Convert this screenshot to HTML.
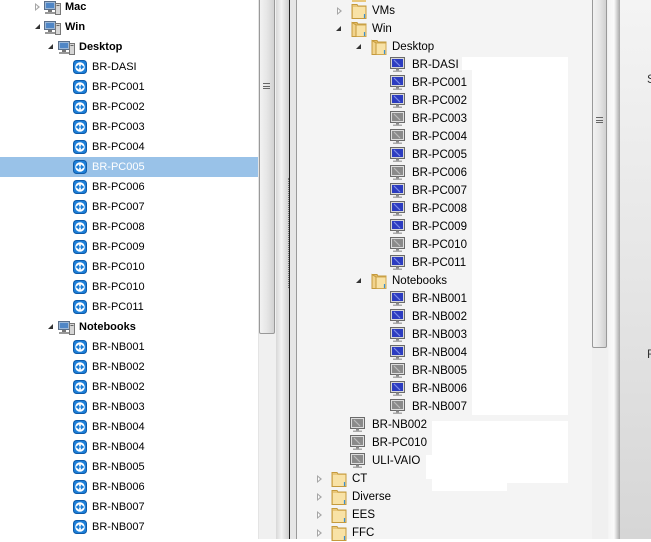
<!DOCTYPE html>
<html><head><meta charset="utf-8"><style>
*{margin:0;padding:0;box-sizing:border-box}
body{width:651px;height:539px;overflow:hidden;position:relative;background:#fff;font-family:"Liberation Sans",Tahoma,sans-serif}
.a{position:absolute}
.l{position:absolute;height:20px;line-height:20px;font-size:11px;color:#000;white-space:nowrap}
.l.b{font-weight:bold}
.r{position:absolute;height:18px;line-height:18px;font-size:11.5px;color:#000;white-space:nowrap}
svg.i{position:absolute}
.tri{position:absolute;width:0;height:0}
.tc{border-top:4px solid transparent;border-bottom:4px solid transparent;border-left:5px solid #a6a6a6}
.tc:after{content:"";position:absolute;left:-4px;top:-2px;border-top:2px solid transparent;border-bottom:2px solid transparent;border-left:2px solid #fff}
.to{border-left:5px solid transparent;border-bottom:5px solid #333}
</style></head><body>
<svg width="0" height="0" style="position:absolute">
<defs>
<symbol id="tv" viewBox="0 0 14 14"><rect x="0.5" y="0.5" width="13" height="13" rx="3" fill="#1d7fd8" stroke="#0e5aa8"/><circle cx="7" cy="7" r="4.8" fill="#fff"/><path d="M3.6 7h6.8M3.6 7l2-1.6v3.2zM10.4 7l-2-1.6v3.2z" stroke="#1d7fd8" stroke-width="1.1" fill="#1d7fd8"/></symbol>
<symbol id="mb" viewBox="0 0 15 15"><rect x="0.5" y="0.5" width="14" height="11" fill="#d8d8d8" stroke="#6a6a6a"/><rect x="2" y="2" width="11" height="8" fill="#2c3cc0"/><path d="M4 3l6 6" stroke="#7d8ce8" stroke-width="1.2"/><rect x="6" y="11.5" width="3" height="2" fill="#888"/><rect x="3" y="13.5" width="9" height="1.5" fill="#aaa"/></symbol>
<symbol id="mg" viewBox="0 0 15 15"><rect x="0.5" y="0.5" width="14" height="11" fill="#dedede" stroke="#6a6a6a"/><rect x="2" y="2" width="11" height="8" fill="#8a8a8a"/><path d="M4 3l6 6" stroke="#bbb" stroke-width="1.2"/><rect x="6" y="11.5" width="3" height="2" fill="#888"/><rect x="3" y="13.5" width="9" height="1.5" fill="#aaa"/></symbol>
<symbol id="fc" viewBox="0 0 16 16"><path d="M1 1.5h5l1 1.5h8v12.5H1z" fill="#e9c77a" stroke="#c59a3c"/><rect x="2" y="4" width="12.5" height="11" fill="#f8e2a6"/><path d="M13.5 11v4" stroke="#3a8fd0" stroke-width="1.2"/></symbol>
<symbol id="fo" viewBox="0 0 16 16"><path d="M1 1.5h5l1 1.5h8v12.5H1z" fill="#e3bc66" stroke="#c59a3c"/><path d="M5 4h10v11.5H5z" fill="#f8e2a6" stroke="#d0a850"/><path d="M1 1.5L5 4v11.5L1 15.5z" fill="#f1d38c" stroke="#c59a3c"/><path d="M13.5 11v4" stroke="#3a8fd0" stroke-width="1.2"/></symbol>
<symbol id="cg" viewBox="0 0 17 15"><rect x="0.5" y="1.5" width="11" height="8" fill="#9cb8d8" stroke="#5a6f8a"/><rect x="2" y="3" width="8" height="5" fill="#4f86c6"/><rect x="4" y="10" width="4" height="2" fill="#777"/><rect x="1" y="12" width="10" height="2" fill="#999"/><rect x="11.5" y="3.5" width="5" height="11" fill="#d6d6d6" stroke="#777"/><rect x="12.5" y="5" width="3" height="1" fill="#666"/></symbol>
</defs></svg>

<div class="a" style="left:0;top:157px;width:258px;height:20px;background:#99c2e8"></div>
<div class="tri tc" style="left:35px;top:3px"></div>
<svg class="i" style="left:44px;top:0" width="17" height="15"><use href="#cg"/></svg><div class="l b" style="left:65px;top:-3px">Mac</div>
<div class="tri to" style="left:35px;top:24px"></div>
<svg class="i" style="left:44px;top:20px" width="17" height="15"><use href="#cg"/></svg><div class="l b" style="left:65px;top:17px">Win</div>
<div class="tri to" style="left:48px;top:44px"></div>
<svg class="i" style="left:58px;top:40px" width="17" height="15"><use href="#cg"/></svg><div class="l b" style="left:79px;top:37px">Desktop</div>
<div class="tri to" style="left:48px;top:324px"></div>
<svg class="i" style="left:58px;top:320px" width="17" height="15"><use href="#cg"/></svg><div class="l b" style="left:79px;top:317px">Notebooks</div>

<svg class="i" style="left:73px;top:60px" width="14" height="14"><use href="#tv"/></svg><div class="l" style="left:92px;top:57px">BR-DASI</div>
<svg class="i" style="left:73px;top:80px" width="14" height="14"><use href="#tv"/></svg><div class="l" style="left:92px;top:77px">BR-PC001</div>
<svg class="i" style="left:73px;top:100px" width="14" height="14"><use href="#tv"/></svg><div class="l" style="left:92px;top:97px">BR-PC002</div>
<svg class="i" style="left:73px;top:120px" width="14" height="14"><use href="#tv"/></svg><div class="l" style="left:92px;top:117px">BR-PC003</div>
<svg class="i" style="left:73px;top:140px" width="14" height="14"><use href="#tv"/></svg><div class="l" style="left:92px;top:137px">BR-PC004</div>
<svg class="i" style="left:73px;top:160px" width="14" height="14"><use href="#tv"/></svg><div class="l" style="left:92px;top:157px;color:#fff">BR-PC005</div>
<svg class="i" style="left:73px;top:180px" width="14" height="14"><use href="#tv"/></svg><div class="l" style="left:92px;top:177px">BR-PC006</div>
<svg class="i" style="left:73px;top:200px" width="14" height="14"><use href="#tv"/></svg><div class="l" style="left:92px;top:197px">BR-PC007</div>
<svg class="i" style="left:73px;top:220px" width="14" height="14"><use href="#tv"/></svg><div class="l" style="left:92px;top:217px">BR-PC008</div>
<svg class="i" style="left:73px;top:240px" width="14" height="14"><use href="#tv"/></svg><div class="l" style="left:92px;top:237px">BR-PC009</div>
<svg class="i" style="left:73px;top:260px" width="14" height="14"><use href="#tv"/></svg><div class="l" style="left:92px;top:257px">BR-PC010</div>
<svg class="i" style="left:73px;top:280px" width="14" height="14"><use href="#tv"/></svg><div class="l" style="left:92px;top:277px">BR-PC010</div>
<svg class="i" style="left:73px;top:300px" width="14" height="14"><use href="#tv"/></svg><div class="l" style="left:92px;top:297px">BR-PC011</div>
<svg class="i" style="left:73px;top:340px" width="14" height="14"><use href="#tv"/></svg><div class="l" style="left:92px;top:337px">BR-NB001</div>
<svg class="i" style="left:73px;top:360px" width="14" height="14"><use href="#tv"/></svg><div class="l" style="left:92px;top:357px">BR-NB002</div>
<svg class="i" style="left:73px;top:380px" width="14" height="14"><use href="#tv"/></svg><div class="l" style="left:92px;top:377px">BR-NB002</div>
<svg class="i" style="left:73px;top:400px" width="14" height="14"><use href="#tv"/></svg><div class="l" style="left:92px;top:397px">BR-NB003</div>
<svg class="i" style="left:73px;top:420px" width="14" height="14"><use href="#tv"/></svg><div class="l" style="left:92px;top:417px">BR-NB004</div>
<svg class="i" style="left:73px;top:440px" width="14" height="14"><use href="#tv"/></svg><div class="l" style="left:92px;top:437px">BR-NB004</div>
<svg class="i" style="left:73px;top:460px" width="14" height="14"><use href="#tv"/></svg><div class="l" style="left:92px;top:457px">BR-NB005</div>
<svg class="i" style="left:73px;top:480px" width="14" height="14"><use href="#tv"/></svg><div class="l" style="left:92px;top:477px">BR-NB006</div>
<svg class="i" style="left:73px;top:500px" width="14" height="14"><use href="#tv"/></svg><div class="l" style="left:92px;top:497px">BR-NB007</div>
<svg class="i" style="left:73px;top:520px" width="14" height="14"><use href="#tv"/></svg><div class="l" style="left:92px;top:517px">BR-NB007</div>

<div class="a" style="left:258px;top:0;width:18px;height:539px;background:#f0f0f0;border-left:1px solid #e4e4e4"></div>
<div class="a" style="left:259px;top:-2px;width:16px;height:336px;background:linear-gradient(90deg,#f2f2f2,#e6e6e6 50%,#d2d2d2);border:1px solid #999;border-radius:2px"></div>
<div class="a" style="left:263px;top:83px;width:7px;height:6px;border-top:1px solid #666;border-bottom:1px solid #666"><div style="margin-top:1.5px;height:1px;background:#666"></div></div>
<div class="a" style="left:276px;top:0;width:14px;height:539px;background:linear-gradient(90deg,#d8d8d8,#f3f3f3 40%,#c8c8c8)"></div>
<div class="a" style="left:289px;top:0;width:1px;height:539px;background:#222"></div>
<div class="a" style="left:290px;top:0;width:6px;height:539px;background:#e6e6e6"></div>
<div class="a" style="left:296px;top:0;width:1px;height:539px;background:#9a9a9a"></div>
<div class="a" style="left:288px;top:178px;width:1px;height:110px;border-left:1px dotted #777"></div>

<div class="a" style="left:297px;top:0;width:295px;height:539px;background:#f4f4f4"></div>
<div class="a" style="left:472px;top:57px;width:96px;height:358px;background:#fff"></div>
<div class="a" style="left:462px;top:57px;width:26px;height:13px;background:#fff"></div>
<div class="a" style="left:432px;top:421px;width:75px;height:70px;background:#fff"></div>
<div class="a" style="left:500px;top:421px;width:68px;height:62px;background:#fff"></div>
<div class="a" style="left:426px;top:455px;width:8px;height:24px;background:#fff"></div>

<div class="a" style="left:352px;top:-14px;width:14px;height:16px;background:#e9c77a"></div>
<div class="tri tc" style="left:337px;top:7px"></div>
<svg class="i" style="left:351px;top:3px" width="16" height="16"><use href="#fc"/></svg><div class="r" style="left:372px;top:2px">VMs</div>
<div class="tri to" style="left:336px;top:26px"></div>
<svg class="i" style="left:351px;top:21px" width="16" height="16"><use href="#fo"/></svg><div class="r" style="left:372px;top:20px">Win</div>
<div class="tri to" style="left:356px;top:44px"></div>
<svg class="i" style="left:371px;top:39px" width="16" height="16"><use href="#fo"/></svg><div class="r" style="left:392px;top:38px">Desktop</div>
<div class="tri to" style="left:356px;top:278px"></div>
<svg class="i" style="left:371px;top:273px" width="16" height="16"><use href="#fo"/></svg><div class="r" style="left:392px;top:272px">Notebooks</div>

<svg class="i" style="left:390px;top:57px" width="15" height="15"><use href="#mb"/></svg><div class="r" style="left:412px;top:56px">BR-DASI</div>
<svg class="i" style="left:390px;top:75px" width="15" height="15"><use href="#mb"/></svg><div class="r" style="left:412px;top:74px">BR-PC001</div>
<svg class="i" style="left:390px;top:93px" width="15" height="15"><use href="#mb"/></svg><div class="r" style="left:412px;top:92px">BR-PC002</div>
<svg class="i" style="left:390px;top:111px" width="15" height="15"><use href="#mg"/></svg><div class="r" style="left:412px;top:110px">BR-PC003</div>
<svg class="i" style="left:390px;top:129px" width="15" height="15"><use href="#mg"/></svg><div class="r" style="left:412px;top:128px">BR-PC004</div>
<svg class="i" style="left:390px;top:147px" width="15" height="15"><use href="#mb"/></svg><div class="r" style="left:412px;top:146px">BR-PC005</div>
<svg class="i" style="left:390px;top:165px" width="15" height="15"><use href="#mg"/></svg><div class="r" style="left:412px;top:164px">BR-PC006</div>
<svg class="i" style="left:390px;top:183px" width="15" height="15"><use href="#mb"/></svg><div class="r" style="left:412px;top:182px">BR-PC007</div>
<svg class="i" style="left:390px;top:201px" width="15" height="15"><use href="#mb"/></svg><div class="r" style="left:412px;top:200px">BR-PC008</div>
<svg class="i" style="left:390px;top:219px" width="15" height="15"><use href="#mb"/></svg><div class="r" style="left:412px;top:218px">BR-PC009</div>
<svg class="i" style="left:390px;top:237px" width="15" height="15"><use href="#mg"/></svg><div class="r" style="left:412px;top:236px">BR-PC010</div>
<svg class="i" style="left:390px;top:255px" width="15" height="15"><use href="#mb"/></svg><div class="r" style="left:412px;top:254px">BR-PC011</div>
<svg class="i" style="left:390px;top:291px" width="15" height="15"><use href="#mb"/></svg><div class="r" style="left:412px;top:290px">BR-NB001</div>
<svg class="i" style="left:390px;top:309px" width="15" height="15"><use href="#mb"/></svg><div class="r" style="left:412px;top:308px">BR-NB002</div>
<svg class="i" style="left:390px;top:327px" width="15" height="15"><use href="#mb"/></svg><div class="r" style="left:412px;top:326px">BR-NB003</div>
<svg class="i" style="left:390px;top:345px" width="15" height="15"><use href="#mb"/></svg><div class="r" style="left:412px;top:344px">BR-NB004</div>
<svg class="i" style="left:390px;top:363px" width="15" height="15"><use href="#mg"/></svg><div class="r" style="left:412px;top:362px">BR-NB005</div>
<svg class="i" style="left:390px;top:381px" width="15" height="15"><use href="#mb"/></svg><div class="r" style="left:412px;top:380px">BR-NB006</div>
<svg class="i" style="left:390px;top:399px" width="15" height="15"><use href="#mg"/></svg><div class="r" style="left:412px;top:398px">BR-NB007</div>
<svg class="i" style="left:350px;top:417px" width="15" height="15"><use href="#mg"/></svg><div class="r" style="left:372px;top:416px">BR-NB002</div>
<svg class="i" style="left:350px;top:435px" width="15" height="15"><use href="#mg"/></svg><div class="r" style="left:372px;top:434px">BR-PC010</div>
<svg class="i" style="left:350px;top:453px" width="15" height="15"><use href="#mg"/></svg><div class="r" style="left:372px;top:452px">ULI-VAIO</div>

<div class="tri tc" style="left:317px;top:475px"></div>
<svg class="i" style="left:331px;top:471px" width="16" height="16"><use href="#fc"/></svg><div class="r" style="left:352px;top:470px">CT</div>
<div class="tri tc" style="left:317px;top:493px"></div>
<svg class="i" style="left:331px;top:489px" width="16" height="16"><use href="#fc"/></svg><div class="r" style="left:352px;top:488px">Diverse</div>
<div class="tri tc" style="left:317px;top:511px"></div>
<svg class="i" style="left:331px;top:507px" width="16" height="16"><use href="#fc"/></svg><div class="r" style="left:352px;top:506px">EES</div>
<div class="tri tc" style="left:317px;top:529px"></div>
<svg class="i" style="left:331px;top:525px" width="16" height="16"><use href="#fc"/></svg><div class="r" style="left:352px;top:524px">FFC</div>

<div class="a" style="left:592px;top:0;width:16px;height:539px;background:#f0f0f0"></div>
<div class="a" style="left:592px;top:-2px;width:15px;height:350px;background:linear-gradient(90deg,#f2f2f2,#e6e6e6 50%,#d0d0d0);border:1px solid #999;border-radius:2px"></div>
<div class="a" style="left:596px;top:117px;width:7px;height:6px;border-top:1px solid #666;border-bottom:1px solid #666"><div style="margin-top:1.5px;height:1px;background:#666"></div></div>
<div class="a" style="left:608px;top:0;width:12px;height:539px;background:linear-gradient(90deg,#f4f4f4,#fafafa 50%,#a8a8a8)"></div>
<div class="a" style="left:620px;top:0;width:31px;height:539px;background:linear-gradient(180deg,#f4f4f4,#e6e6e6 50%,#d6d6d6)"></div>
<div class="a" style="left:647px;top:72px;font-size:12px;color:#333">S</div>
<div class="a" style="left:647px;top:347px;font-size:12px;color:#333">F</div>
</body></html>
